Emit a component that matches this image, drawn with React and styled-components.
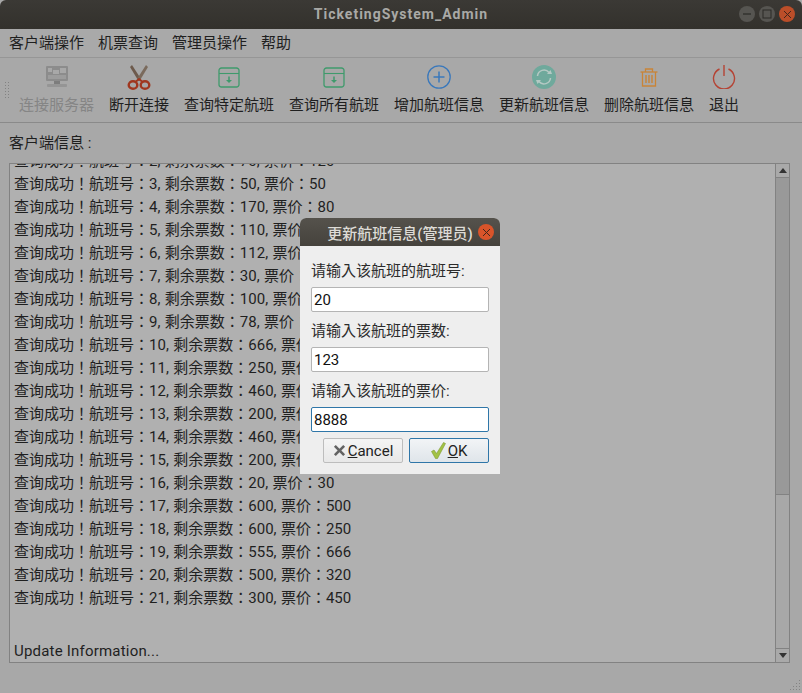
import React from "react";
import styled, { createGlobalStyle } from "styled-components";

const FONT = `Roboto, "Noto Sans CJK JP", sans-serif`;

const menus = ["客户端操作", "机票查询", "管理员操作", "帮助"];

const ServerIcon = () => (
  <svg width="24" height="22" viewBox="0 0 24 22">
    <rect x="1" y="0" width="22" height="15" rx="1" fill="#8c8c8c" />
    <rect x="3" y="2" width="4" height="4" fill="#a8a8a8" />
    <rect x="8" y="4" width="6" height="4" fill="#a8a8a8" />
    <rect x="15" y="2" width="6" height="5" fill="#a8a8a8" />
    <rect x="3" y="9" width="18" height="4" fill="#9c9c9c" />
    <rect x="9" y="15" width="6" height="3" fill="#7d7d7d" />
    <rect x="2" y="18" width="20" height="3" rx="1" fill="#959595" />
  </svg>
);

const ScissorsIcon = () => (
  <svg width="24" height="25" viewBox="0 0 24 25">
    <path d="M5 0 L14 14 L11.500 16 L3 2 Z" fill="#6d5a4c" />
    <path d="M19 0 L10 14 L12.500 16 L21 2 Z" fill="#7a6a5c" />
    <ellipse cx="6" cy="20" rx="4.300" ry="3.800" fill="none" stroke="#a0371f" strokeWidth="2.400" />
    <ellipse cx="18" cy="20" rx="4.300" ry="3.800" fill="none" stroke="#a0371f" strokeWidth="2.400" />
    <path d="M9 16.500 L12 14 L15 16.500" fill="none" stroke="#a0371f" strokeWidth="2" />
  </svg>
);

const BoxIcon = () => (
  <svg width="22" height="21" viewBox="0 0 22 21" fill="none" stroke="#3f9a6c">
    <path d="M3.500 1h15a2.500 2.500 0 0 1 2.500 2.500v14a2.500 2.500 0 0 1-2.500 2.500h-15A2.500 2.500 0 0 1 1 17.500v-14A2.500 2.500 0 0 1 3.500 1z" strokeWidth="1.300" />
    <path d="M1 6.500h20" strokeWidth="1.100" />
    <path d="M11 9.500v4" strokeWidth="1.500" />
    <path d="M8 13h6l-3 3z" fill="#3f9a6c" stroke="none" />
  </svg>
);

const PlusIcon = () => (
  <svg width="24" height="24" viewBox="0 0 24 24" fill="none" stroke="#3a78bb" strokeWidth="1.300">
    <circle cx="12" cy="12" r="11.200" />
    <path d="M12 6.500v11M6.500 12h11" strokeWidth="1.500" />
  </svg>
);

const RefreshIcon = () => (
  <svg width="24" height="24" viewBox="0 0 24 24">
    <circle cx="12" cy="12" r="12" fill="#6fa99c" />
    <path d="M5.500 11a6.500 6.500 0 0 1 11.500-3.500" fill="none" stroke="#b5c9c4" strokeWidth="1.500" />
    <path d="M18.500 13a6.500 6.500 0 0 1-11.500 3.500" fill="none" stroke="#b5c9c4" strokeWidth="1.500" />
    <path d="M15 9h5l-1.500-4z" fill="#b5c9c4" />
    <path d="M9 15H4l1.500 4z" fill="#b5c9c4" />
  </svg>
);

const TrashIcon = () => (
  <svg width="18" height="19" viewBox="0 0 18 19" fill="none" stroke="#c98437" strokeWidth="1.300">
    <path d="M0.500 4h17" />
    <path d="M5.500 4V1h7v3" />
    <path d="M2.500 4v14h13V4" />
    <path d="M6 7v8M9 7v8M12 7v8" strokeWidth="1.400" />
  </svg>
);

const PowerIcon = () => (
  <svg width="24" height="24" viewBox="0 0 24 24" fill="none" stroke="#b54334" strokeWidth="1.400">
    <path d="M7.500 4a10.500 10.500 0 1 0 9 0" />
    <path d="M12 0v11" />
  </svg>
);

const tools = [
  { label: "连接服务器", icon: <ServerIcon />, disabled: true },
  { label: "断开连接", icon: <ScissorsIcon /> },
  { label: "查询特定航班", icon: <BoxIcon /> },
  { label: "查询所有航班", icon: <BoxIcon /> },
  { label: "增加航班信息", icon: <PlusIcon /> },
  { label: "更新航班信息", icon: <RefreshIcon /> },
  { label: "删除航班信息", icon: <TrashIcon /> },
  { label: "退出", icon: <PowerIcon /> },
];

const flights = [
  [2, 70, 120],
  [3, 50, 50],
  [4, 170, 80],
  [5, 110, 60],
  [6, 112, 70],
  [7, 30, 500],
  [8, 100, 300],
  [9, 78, 200],
  [10, 666, 100],
  [11, 250, 300],
  [12, 460, 200],
  [13, 200, 100],
  [14, 460, 300],
  [15, 200, 100],
  [16, 20, 30],
  [17, 600, 500],
  [18, 600, 250],
  [19, 555, 666],
  [20, 500, 320],
  [21, 300, 450],
];

const fields = [
  { label: "请输入该航班的航班号:", value: "20" },
  { label: "请输入该航班的票数:", value: "123" },
  { label: "请输入该航班的票价:", value: "8888", focused: true },
];

const App = () => {
  return (
    <>
      <GlobalStyle />
      <Window>
        <TitleBar>
          <TitleText>TicketingSystem_Admin</TitleText>
          <WindowButtons>
            <WindowButton>
              <svg width="10" height="10" viewBox="0 0 10 10">
                <path d="M1 5h8" stroke="#2b2a27" strokeWidth="1.200" />
              </svg>
            </WindowButton>
            <WindowButton>
              <svg width="10" height="10" viewBox="0 0 10 10">
                <rect x="1" y="1" width="8" height="8" fill="none" stroke="#2b2a27" strokeWidth="1" />
              </svg>
            </WindowButton>
            <CloseButton>
              <CloseMark />
            </CloseButton>
          </WindowButtons>
        </TitleBar>

        <MenuBar>
          {menus.map((menu) => (
            <MenuItem key={menu}>{menu}</MenuItem>
          ))}
        </MenuBar>

        <ToolBar>
          <Grip />
          {tools.map((tool) => (
            <ToolButton key={tool.label} $disabled={tool.disabled}>
              <ToolIcon>{tool.icon}</ToolIcon>
              {tool.label}
            </ToolButton>
          ))}
        </ToolBar>

        <Content>
          <InfoLabel>客户端信息 :</InfoLabel>
          <LogBox>
            <LogText>
              <LogLines>
                {flights.map(([id, seats, price]) => (
                  <LogLine key={id}>
                    查询成功！航班号：{id}, 剩余票数：{seats}, 票价：{price}
                  </LogLine>
                ))}
              </LogLines>
              <UpdateLine>Update Information...</UpdateLine>
            </LogText>
            <ScrollBar>
              <ScrollButton>
                <UpArrow />
              </ScrollButton>
              <ScrollThumb />
              <ScrollTrack />
              <ScrollButton $bottom>
                <DownArrow />
              </ScrollButton>
            </ScrollBar>
          </LogBox>
          <ResizeGrip />
        </Content>

        <Dialog>
          <DialogTitle>
            <DialogTitleText>更新航班信息(管理员)</DialogTitleText>
            <DialogClose>
              <CloseMark />
            </DialogClose>
          </DialogTitle>
          <DialogBody>
            {fields.map((field) => (
              <Field key={field.label}>
                <FieldLabel>{field.label}</FieldLabel>
                <FieldInput $focused={field.focused}>{field.value}</FieldInput>
              </Field>
            ))}
            <DialogActions>
              <ActionButton $primary={false}>
                <svg width="13" height="13" viewBox="0 0 14 14">
                  <path d="M3 1 L7 5 L11 1 L13 3 L9 7 L13 11 L11 13 L7 9 L3 13 L1 11 L5 7 L1 3 Z" fill="#636363" />
                </svg>
                <span>
                  <u>C</u>ancel
                </span>
              </ActionButton>
              <ActionButton $primary>
                <svg width="15" height="17" viewBox="0 0 15 17">
                  <path d="M0.500 9.500 L3 8 L5.500 11.500 L12.500 0.500 L14.500 1.500 L6.500 16.500 L4.500 16.500 Z" fill="#a2c244" stroke="#7f9a34" strokeWidth="0.600" />
                </svg>
                <span>
                  <u>O</u>K
                </span>
              </ActionButton>
            </DialogActions>
          </DialogBody>
        </Dialog>
      </Window>
    </>
  );
};

export default App;

const GlobalStyle = createGlobalStyle`
  html, body {
    margin: 0;
    padding: 0;
    background: #9e9e9e;
  }
`;

const Window = styled.div`
  position: relative;
  width: 802px;
  height: 693px;
  display: flex;
  flex-direction: column;
  overflow: hidden;
  background: #a8a8a8;
  color: #1f1f1f;
  font-family: ${FONT};
  font-size: 15px;
`;

const TitleBar = styled.div`
  position: relative;
  box-sizing: border-box;
  height: 29px;
  padding-bottom: 1px;
  flex: none;
  display: flex;
  align-items: center;
  justify-content: center;
  background: linear-gradient(#3b3935, #33312c);
  border-radius: 6px 6px 0 0;
`;

const TitleText = styled.div`
  font-size: 14px;
  font-weight: 700;
  letter-spacing: 1px;
  color: #a9a9a6;
`;

const WindowButtons = styled.div`
  position: absolute;
  right: 7px;
  top: 6px;
  display: flex;
  gap: 4px;
`;

const WindowButton = styled.div`
  width: 16px;
  height: 16px;
  border-radius: 50%;
  display: flex;
  align-items: center;
  justify-content: center;
  background: #565551;
`;

const CloseButton = styled(WindowButton)`
  background: #bb4e29;
`;

const CloseMark = styled.span`
  display: block;
  width: 7px;
  height: 7px;
  background:
    linear-gradient(45deg, transparent 43%, #43261a 43%, #43261a 57%, transparent 57%),
    linear-gradient(-45deg, transparent 43%, #43261a 43%, #43261a 57%, transparent 57%);
`;

const MenuBar = styled.div`
  height: 28px;
  flex: none;
  display: flex;
  align-items: center;
  gap: 14px;
  padding-left: 9px;
  background: #a9a9a9;
  border-bottom: 1px solid #969696;
`;

const MenuItem = styled.div`
  line-height: 27px;
`;

const ToolBar = styled.div`
  position: relative;
  height: 64px;
  flex: none;
  display: flex;
  gap: 15px;
  padding-left: 19px;
  background: #a8a8a8;
  border-bottom: 1px solid #8a8a8a;
`;

const Grip = styled.div`
  position: absolute;
  left: 4px;
  top: 23px;
  width: 5px;
  height: 17px;
  background-image: radial-gradient(#828282 0.7px, transparent 0.8px);
  background-size: 3px 3px;
`;

const ToolButton = styled.div`
  display: flex;
  flex-direction: column;
  align-items: center;
  color: ${(props) => (props.$disabled ? "#858585" : "#1f1f1f")};
  line-height: 20px;
`;

const ToolIcon = styled.div`
  box-sizing: border-box;
  height: 37px;
  padding-top: 1px;
  display: flex;
  align-items: center;
  justify-content: center;
`;

const Content = styled.div`
  position: relative;
  flex: 1;
  display: flex;
  flex-direction: column;
  padding: 8px 12px 0 9px;
  min-height: 0;
`;

const InfoLabel = styled.div`
  line-height: 25px;
  margin-bottom: 7px;
`;

const LogBox = styled.div`
  width: 781px;
  height: 500px;
  flex: none;
  display: flex;
  box-sizing: border-box;
  border: 1px solid #828282;
  background: #b0b0b0;
`;

const LogText = styled.div`
  flex: 1;
  min-width: 0;
  overflow: hidden;
  display: flex;
  flex-direction: column;
  justify-content: flex-end;
  padding: 0 0 0 4px;
`;

const LogLines = styled.div`
  flex: none;
`;

const LogLine = styled.div`
  height: 23px;
  line-height: 25px;
  word-spacing: 0.7px;
  white-space: nowrap;
`;

const UpdateLine = styled.div`
  height: 23px;
  line-height: 25px;
  letter-spacing: 0.2px;
  margin-top: 30px;
  flex: none;
`;

const ScrollBar = styled.div`
  width: 13px;
  flex: none;
  display: flex;
  flex-direction: column;
  border-left: 1px solid #828282;
  background: #a8a8a8;
`;

const ScrollButton = styled.div`
  height: 13px;
  flex: none;
  display: flex;
  align-items: center;
  justify-content: center;
  background: #a9a9a9;
  border-bottom: ${(props) => (props.$bottom ? "none" : "1px solid #828282")};
  border-top: ${(props) => (props.$bottom ? "1px solid #828282" : "none")};
`;

const UpArrow = styled.div`
  width: 0;
  height: 0;
  border-left: 4px solid transparent;
  border-right: 4px solid transparent;
  border-bottom: 5px solid #333;
`;

const DownArrow = styled.div`
  width: 0;
  height: 0;
  border-left: 4px solid transparent;
  border-right: 4px solid transparent;
  border-top: 5px solid #333;
`;

const ScrollThumb = styled.div`
  height: 316px;
  flex: none;
  background: #999;
  border-bottom: 1px solid #828282;
`;

const ScrollTrack = styled.div`
  flex: 1;
  background: #a8a8a8;
`;

const ResizeGrip = styled.div`
  position: absolute;
  right: 2px;
  bottom: 3px;
  width: 11px;
  height: 11px;
  background-image: radial-gradient(#838383 0.7px, transparent 0.8px);
  background-size: 3px 3px;
  clip-path: polygon(100% 0, 100% 100%, 0 100%);
`;

const Dialog = styled.div`
  position: absolute;
  left: 300px;
  top: 218px;
  width: 200px;
  height: 256px;
  display: flex;
  flex-direction: column;
  background: #eeeeee;
  border-radius: 6px 6px 0 0;
  color: #2b2b2b;
`;

const DialogTitle = styled.div`
  position: relative;
  height: 28px;
  flex: none;
  display: flex;
  align-items: center;
  justify-content: center;
  background: linear-gradient(#55524c, #45423c);
  border-radius: 6px 6px 0 0;
`;

const DialogTitleText = styled.div`
  color: #dddbd6;
  font-weight: 500;
  white-space: nowrap;
`;

const DialogClose = styled.div`
  position: absolute;
  right: 6px;
  top: 6px;
  width: 16px;
  height: 16px;
  border-radius: 50%;
  display: flex;
  align-items: center;
  justify-content: center;
  background: #d9542a;
`;

const DialogBody = styled.div`
  flex: 1;
  display: flex;
  flex-direction: column;
  padding: 13px 11px 0;
`;

const Field = styled.div`
  display: flex;
  flex-direction: column;
  margin-bottom: 7px;
`;

const FieldLabel = styled.div`
  line-height: 24px;
  height: 22px;
  margin-bottom: 6px;
`;

const FieldInput = styled.div`
  height: 25px;
  box-sizing: border-box;
  padding: 1px 0 0 2px;
  line-height: 23px;
  background: #fff;
  color: #111;
  border: 1px solid ${(props) => (props.$focused ? "#2f76a8" : "#b4b4b4")};
  border-radius: 2px;
`;

const DialogActions = styled.div`
  display: flex;
  justify-content: flex-end;
  gap: 6px;
  margin-top: -1px;
`;

const ActionButton = styled.div`
  width: 80px;
  height: 25px;
  box-sizing: border-box;
  display: flex;
  align-items: center;
  justify-content: center;
  gap: 2px;
  color: #222;
  border: 1px solid ${(props) => (props.$primary ? "#2f76a8" : "#bdbdbd")};
  border-radius: 2px;
  background: ${(props) =>
    props.$primary ? "linear-gradient(#f2f4f6, #dfe5ea)" : "linear-gradient(#f4f4f4, #e8e8e8)"};
`;
